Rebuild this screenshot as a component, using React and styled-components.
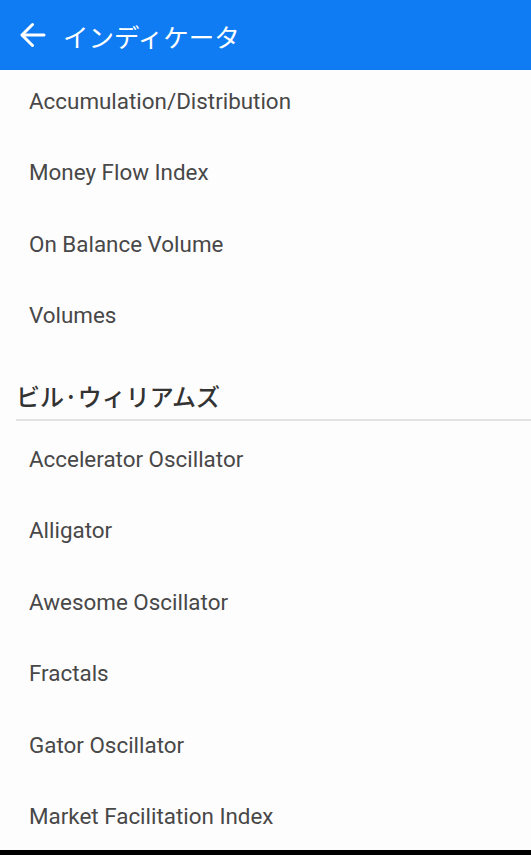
import React from 'react';
import styled, { createGlobalStyle } from 'styled-components';

const GlobalStyle = createGlobalStyle`
  html, body {
    margin: 0;
    padding: 0;
    background: #000;
  }
  body {
    font-family: Roboto, "Noto Sans CJK JP", sans-serif;
  }
`;

const Screen = styled.div`
  width: 531px;
  height: 850px;
  background: #fefdfe;
  overflow: hidden;
  display: flex;
  flex-direction: column;
`;

const AppBar = styled.header`
  height: 70px;
  flex-shrink: 0;
  background: #0f7cf3;
  display: flex;
  align-items: center;
  padding-left: 20px;
  gap: 17px;
  color: #fff;
  position: relative;
  z-index: 1;
`;

const Title = styled.h1`
  margin: 0;
  font-family: "Noto Sans CJK JP", sans-serif;
  font-size: 25.5px;
  font-weight: 400;
`;

const List = styled.div`
  margin-top: -5px;
  display: flex;
  flex-direction: column;
`;

const Row = styled.div`
  height: 71.5px;
  flex-shrink: 0;
  display: flex;
  align-items: center;
  padding-left: 29px;
  font-size: 22.4px;
  color: #484848;
`;

const Section = styled.div`
  height: 70px;
  margin: 0 0 2px 16px;
  border-bottom: 2px solid #e2e2e4;
  display: flex;
  align-items: flex-end;
  padding-bottom: 7px;
  box-sizing: border-box;
  flex-shrink: 0;
`;

const SectionTitle = styled.h2`
  margin: 0;
  font-family: "Noto Sans CJK JP", sans-serif;
  font-size: 24px;
  line-height: 32px;
  font-weight: 500;
  color: #333;
`;

const BackIcon = () => (
  <svg width="26" height="26" viewBox="0 0 26 26" fill="none"
    stroke="#fff" strokeWidth="3" strokeLinecap="round" strokeLinejoin="round">
    <path d="M24 13H2.5" />
    <path d="M12.5 2.5L2 13l10.5 10.5" />
  </svg>
);

const volumeItems = [
  'Accumulation/Distribution',
  'Money Flow Index',
  'On Balance Volume',
  'Volumes',
];

const billWilliams = [
  'Accelerator Oscillator',
  'Alligator',
  'Awesome Oscillator',
  'Fractals',
  'Gator Oscillator',
  'Market Facilitation Index',
];

export default function App() {
  return (
    <>
      <GlobalStyle />
      <Screen>
        <AppBar>
          <BackIcon />
          <Title>インディケータ</Title>
        </AppBar>
        <List>
          {volumeItems.map((name) => (
            <Row key={name}>{name}</Row>
          ))}
          <Section>
            <SectionTitle>ビル·ウィリアムズ</SectionTitle>
          </Section>
          {billWilliams.map((name) => (
            <Row key={name}>{name}</Row>
          ))}
        </List>
      </Screen>
    </>
  );
}
